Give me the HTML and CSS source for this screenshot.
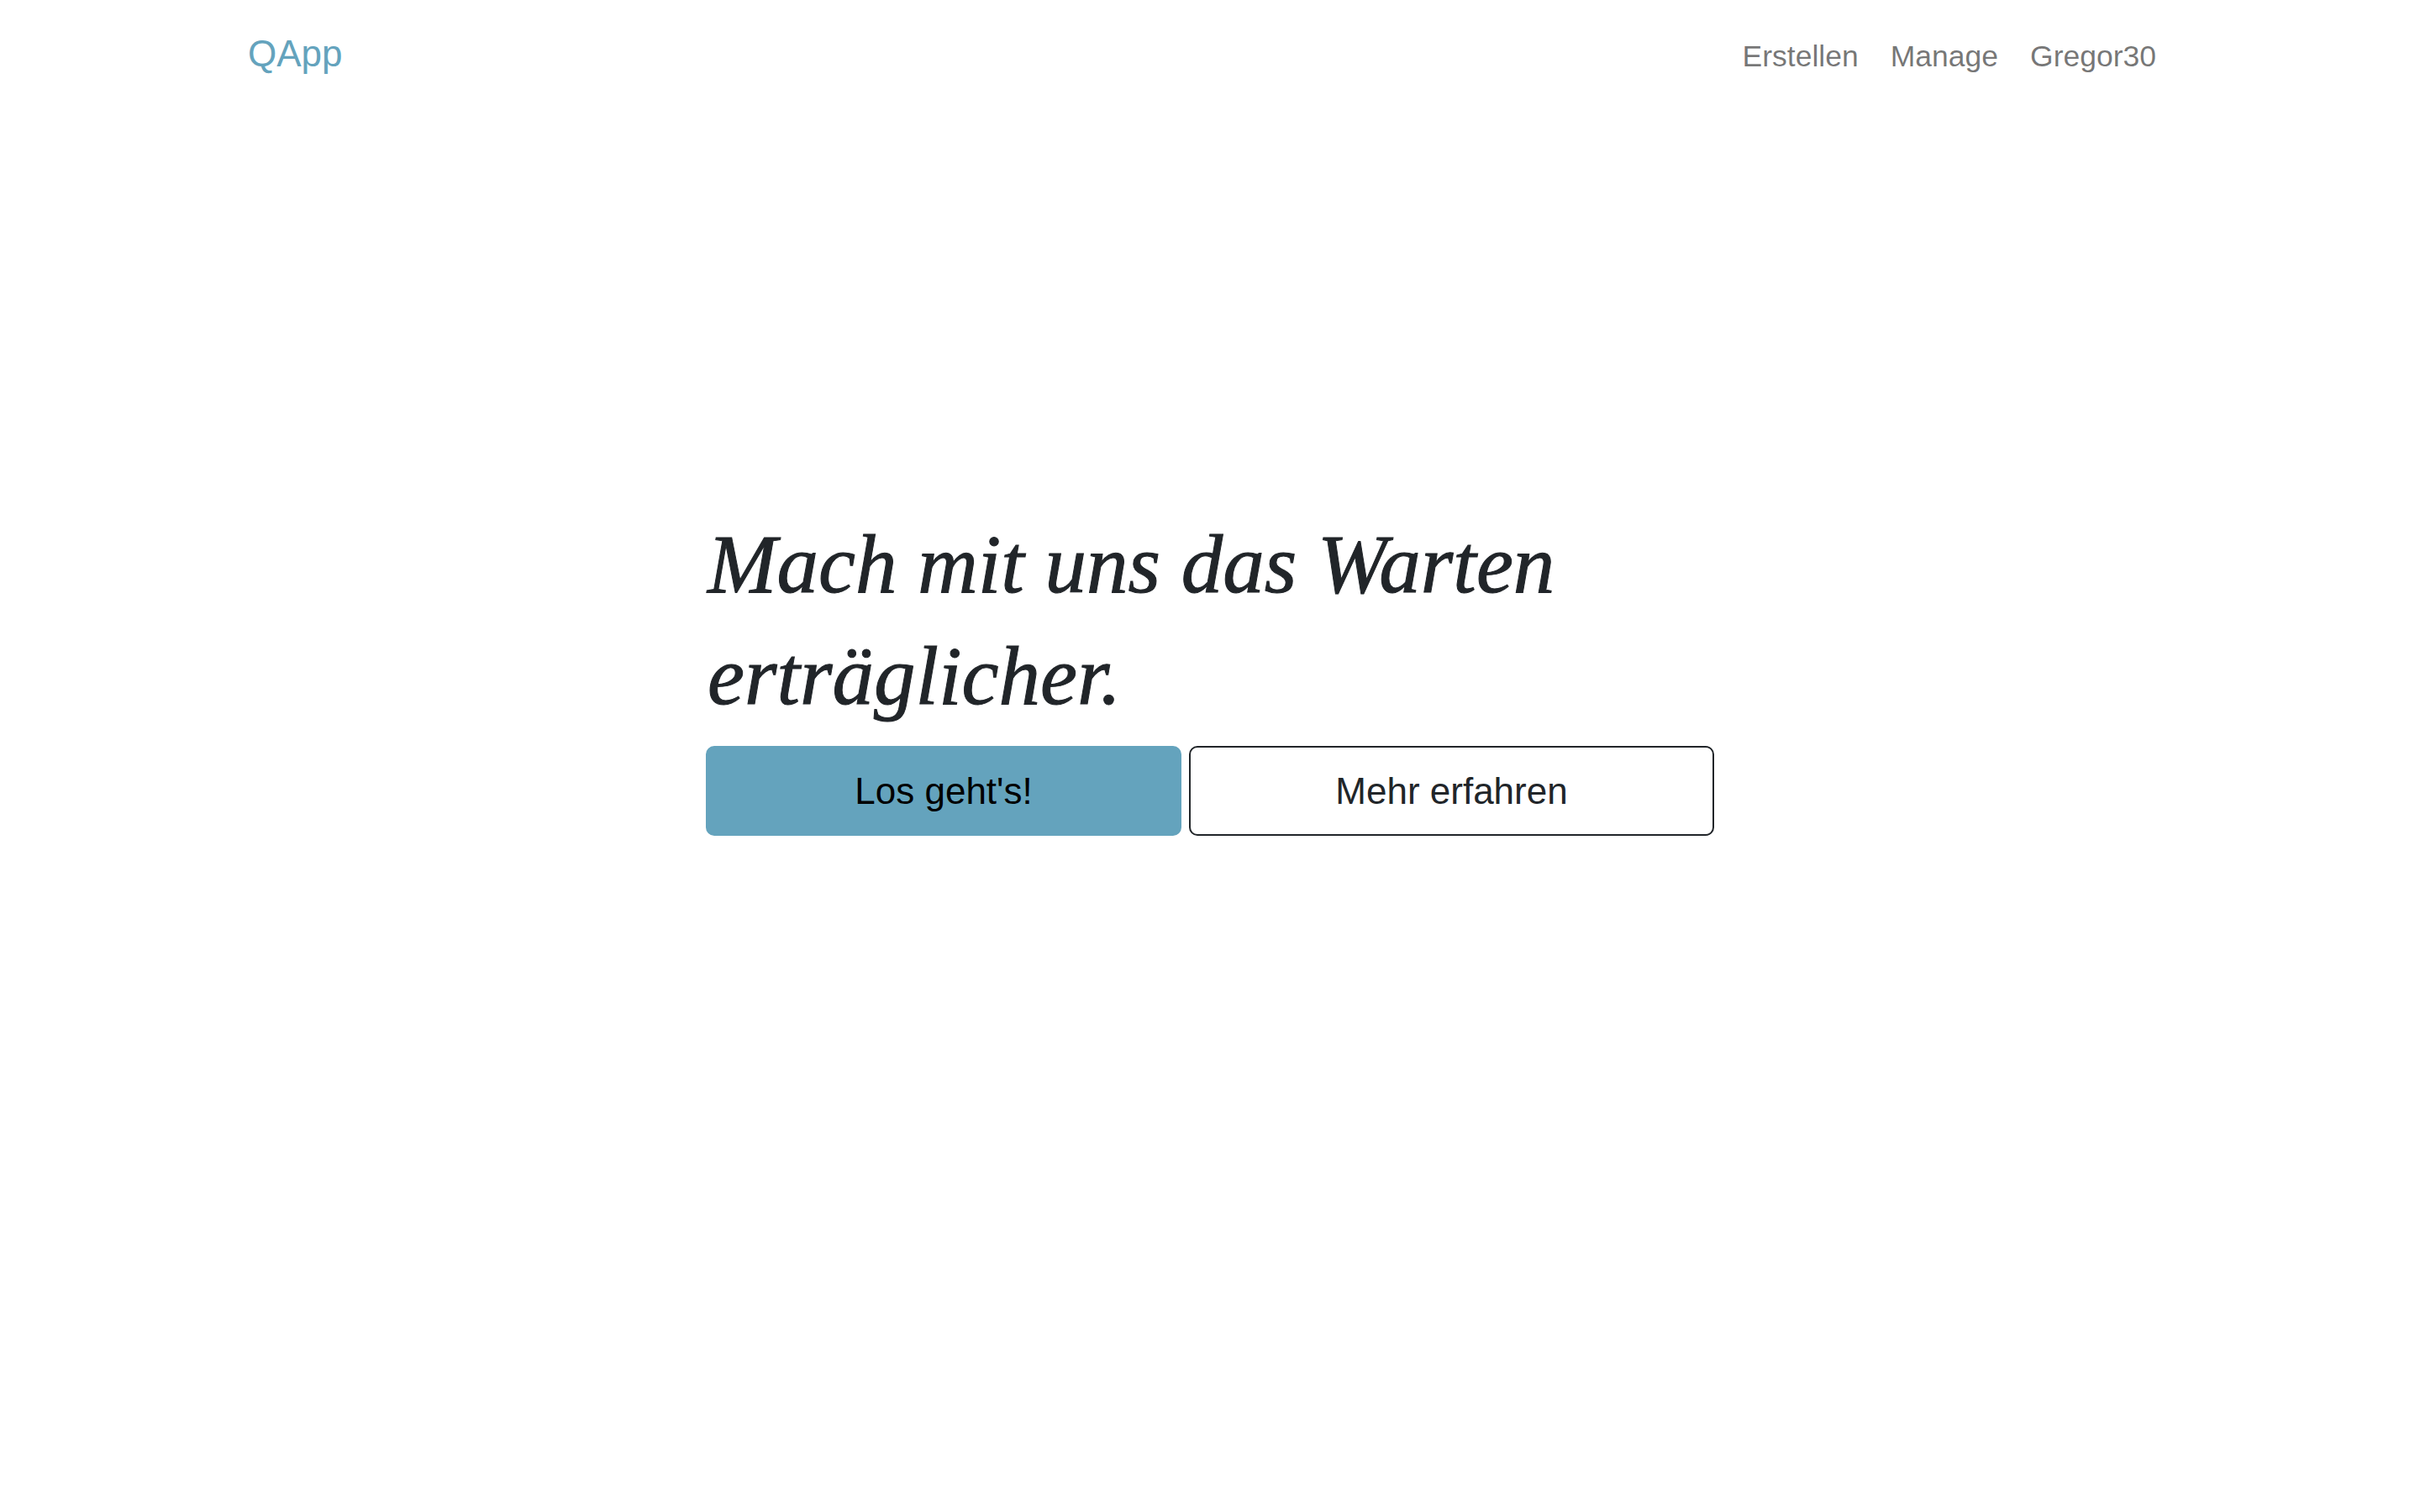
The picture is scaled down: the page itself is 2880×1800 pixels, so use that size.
FILE: index.html
```html
<!DOCTYPE html>
<html lang="de">
<head>
<meta charset="utf-8">
<title>QApp</title>
<link rel="stylesheet" href="styles.css">
</head>
<body>
<nav class="navbar">
  <div class="nav-inner">
    <a class="brand" href="#">QApp</a>
    <div class="nav-links">
      <a class="nav-link" href="#">Erstellen</a>
      <a class="nav-link" href="#">Manage</a>
      <a class="nav-link" href="#">Gregor30</a>
    </div>
  </div>
</nav>
<main class="hero">
  <div class="hero-inner">
    <h1 class="headline">Mach mit uns das Warten erträglicher.</h1>
    <div class="actions">
      <a class="btn btn-primary" href="#">Los geht's!</a>
      <a class="btn btn-outline" href="#">Mehr erfahren</a>
    </div>
  </div>
</main>
</body>
</html>
```

FILE: styles.css
```css
html, body {
  margin: 0;
  padding: 0;
  background: #ffffff;
}

body {
  font-family: "Liberation Sans", Arial, sans-serif;
  color: #212529;
}

a {
  text-decoration: none;
}

.navbar {
  padding-top: 31px;
}

.nav-inner {
  width: 2290px;
  margin: 0 auto;
  display: flex;
  justify-content: space-between;
  align-items: baseline;
}

.brand {
  font-size: 44px;
  line-height: 66px;
  color: #64a3bd;
}

.nav-links {
  display: flex;
  align-items: baseline;
}

.nav-link {
  font-size: 35.5px;
  line-height: 52px;
  padding: 0 19px;
  color: rgba(0, 0, 0, 0.55);
}

.hero {
  padding-top: 508px;
}

.hero-inner {
  width: 1200px;
  margin: 0 auto;
}

.headline {
  margin: 0 0 17px 0;
  font-family: "Liberation Serif", "Times New Roman", serif;
  font-style: italic;
  font-weight: normal;
  font-size: 99px;
  line-height: 133px;
  color: #212529;
  padding-left: 2px;
  -webkit-text-stroke: 1px #212529;
}

.actions {
  display: grid;
  grid-template-columns: 566fr 625fr;
  column-gap: 9px;
}

.btn {
  box-sizing: border-box;
  height: 107px;
  display: flex;
  align-items: center;
  justify-content: center;
  font-size: 44px;
  line-height: 66px;
  border-radius: 10px;
  border: 2px solid transparent;
}

.btn-primary {
  background: #64a3bd;
  border-color: #64a3bd;
  color: #000000;
}

.btn-outline {
  background: #ffffff;
  border-color: #212529;
  color: #212529;
}
```
